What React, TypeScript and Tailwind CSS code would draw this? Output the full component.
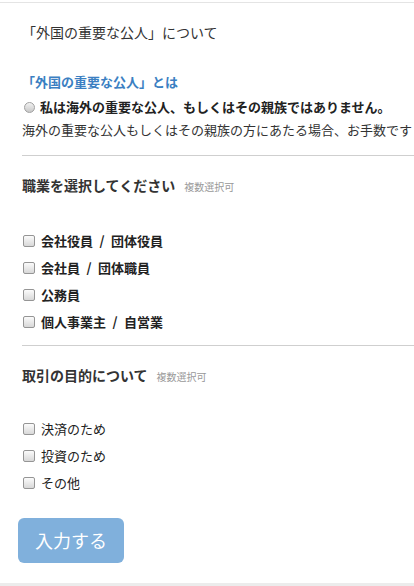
const jp = { fontFamily: '"Noto Sans CJK JP", "Noto Sans", sans-serif' };

function Check({ label, bold }: { label: string; bold?: boolean }) {
  return (
    <label className="flex items-center h-[27px] gap-[6px]">
      <span className="ml-px w-[12px] h-[12px] rounded-[2px] border border-[#959595] bg-gradient-to-b from-[#fbfbfb] to-[#d8d8d8] shrink-0" />
      <span className={`text-[13px] leading-5 text-[#222] whitespace-pre ${bold ? "font-bold" : ""}`}>{label}</span>
    </label>
  );
}

function SectionHeading({ title }: { title: string }) {
  return (
    <div className="flex items-baseline gap-[9px] h-5 leading-5">
      <span className="text-[14px] font-bold text-[#333]">{title}</span>
      <span className="text-[10px] text-[#999]">複数選択可</span>
    </div>
  );
}

export default function App() {
  const jobs = [
    "会社役員\u2002/\u2002団体役員",
    "会社員\u2002/\u2002団体職員",
    "公務員",
    "個人事業主\u2002/\u2002自営業",
  ];
  const purposes = ["決済のため", "投資のため", "その他"];

  return (
    <div className="bg-white h-[586px] overflow-hidden flex flex-col" style={jp}>
      <div className="pt-[2px]">
        <div className="border-t border-[#e4e4e4]" />
      </div>

      <div className="pl-[22px] flex-1 flex flex-col">
        {/* PEP */}
        <div className="mt-[19px] h-5 leading-5 text-[14px] text-[#333]">「外国の重要な公人」について</div>
        <div className="mt-[30px] h-5 leading-5 text-[13px] font-bold text-[#3b7fc2]">「外国の重要な公人」とは</div>
        <label className="mt-[5px] flex items-center h-5 gap-[5px]">
          <span className="ml-[2px] w-[11px] h-[11px] rounded-full border border-[#a0a0a0] bg-gradient-to-b from-[#f2f2f2] to-[#c8c8c8] shrink-0" />
          <span className="text-[13px] leading-5 font-bold text-[#222]">私は海外の重要な公人、もしくはその親族ではありません。</span>
        </label>
        <div className="mt-[3px] h-5 leading-5 text-[13px] text-[#333] whitespace-nowrap overflow-hidden">
          海外の重要な公人もしくはその親族の方にあたる場合、お手数です
        </div>
        <div className="mt-[15px] border-t border-[#cfcfcf]" />

        {/* occupation */}
        <div className="mt-[19px]">
          <SectionHeading title="職業を選択してください" />
        </div>
        <div className="mt-[32px] flex flex-col">
          {jobs.map((j) => (
            <Check key={j} label={j} bold />
          ))}
        </div>
        <div className="mt-[10px] border-t border-[#cfcfcf]" />

        {/* purpose */}
        <div className="mt-[19px]">
          <SectionHeading title="取引の目的について" />
        </div>
        <div className="mt-[30px] flex flex-col">
          {purposes.map((p) => (
            <Check key={p} label={p} />
          ))}
        </div>

        <button className="mt-[22px] -ml-1 w-[106px] h-[45px] rounded-[6px] bg-[#80b0dc] text-white text-[18px] self-start">
          入力する
        </button>
      </div>

      <div className="h-[3px] bg-[#ececec]" />
    </div>
  );
}
